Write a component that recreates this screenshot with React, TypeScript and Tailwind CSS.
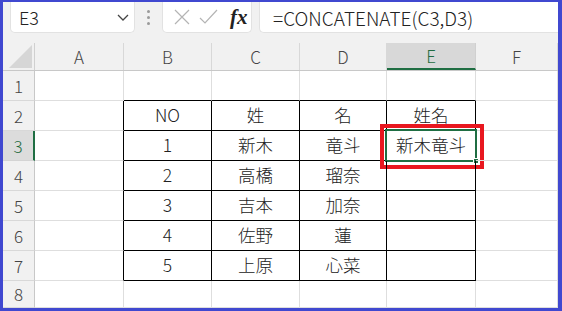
import React from "react";

const COLS = ["A", "B", "C", "D", "E", "F"];
const COLW = [89, 88, 88, 87, 89, 82];
const ROWH = [30, 30, 30, 30, 30, 30, 30, 27];

const data: Record<string, string> = {
  B2: "NO", C2: "姓", D2: "名", E2: "姓名",
  B3: "1", C3: "新木", D3: "竜斗", E3: "新木竜斗",
  B4: "2", C4: "高橋", D4: "瑠奈",
  B5: "3", C5: "吉本", D5: "加奈",
  B6: "4", C6: "佐野", D6: "蓮",
  B7: "5", C7: "上原", D7: "心菜",
};

const font = { fontFamily: '"Noto Sans CJK JP", "Noto Sans", sans-serif' };

export default function App() {
  return (
    <div className="w-[562px] h-[311px] bg-[#4048d0] pl-[3px] pt-[2px] pr-[4px] pb-[3px]" style={font}>
      <div className="w-[555px] h-[306px] bg-white flex flex-col overflow-hidden">
        {/* formula bar */}
        <div className="h-[41px] bg-[#f1f1f1] flex items-start pl-[7px] shrink-0">
          <div className="w-[125px] h-[31px] bg-white rounded-b-[5px] border border-t-0 border-[#e2e2e2] flex items-center justify-between pl-[8px] pr-[4px]">
            <span className="text-[18px] text-[#222] leading-none font-light">E3</span>
            <svg width="14" height="10" viewBox="0 0 14 10">
              <path d="M2 3 L7 8 L12 3" fill="none" stroke="#444" strokeWidth="1.3" />
            </svg>
          </div>
          <div className="w-[27px] h-[31px] flex flex-col items-center justify-center gap-[3px]">
            <span className="w-[3px] h-[3px] bg-[#9a9a9a] rounded-full" />
            <span className="w-[3px] h-[3px] bg-[#9a9a9a] rounded-full" />
            <span className="w-[3px] h-[3px] bg-[#9a9a9a] rounded-full" />
          </div>
          <div className="w-[90px] h-[31px] bg-white rounded-b-[5px] border border-t-0 border-[#e2e2e2] flex items-center pl-[9px] gap-[6px]">
            <svg width="20" height="20" viewBox="0 0 20 20">
              <path d="M3 3 L17 17 M17 3 L3 17" stroke="#b4b4b4" strokeWidth="1.2" />
            </svg>
            <svg width="20" height="20" viewBox="0 0 20 20">
              <path d="M2 11 L7 16 L19 3" fill="none" stroke="#b4b4b4" strokeWidth="1.2" />
            </svg>
            <span className="text-[21px] italic font-bold text-[#222] leading-none ml-[6px]" style={{ fontFamily: '"Liberation Serif", serif' }}>fx</span>
          </div>
          <div className="ml-[7px] flex-1 h-[31px] bg-white rounded-bl-[5px] border border-t-0 border-r-0 border-[#e2e2e2] flex items-center pl-[13px]">
            <span className="text-[19px] text-[#222] leading-none font-light">=CONCATENATE(C3,D3)</span>
          </div>
        </div>

        {/* column header */}
        <div className="h-[28px] flex shrink-0 bg-[#f1f1f1] border-b border-[#c8c8c8]">
          <div className="w-[32px] h-full border-r border-[#d0d0d0] flex items-end justify-end pr-[2px] pb-[2px]">
            <svg width="23" height="23" viewBox="0 0 23 23">
              <path d="M23 0 L23 23 L0 23 Z" fill="#d6d6d6" />
            </svg>
          </div>
          {COLS.map((c, i) => {
            const sel = c === "E";
            return (
              <div
                key={c}
                style={{ width: COLW[i] }}
                className={
                  sel
                    ? "h-full flex items-center justify-center text-[17px] font-light text-[#1f6b3f] bg-[#d8d8d8] border-r border-[#d0d0d0] border-b-2 border-b-[#1f6e43]"
                    : "h-full flex items-center justify-center text-[17px] font-light text-[#444] border-r border-[#d8d8d8]"
                }
              >
                {c}
              </div>
            );
          })}
        </div>

        {/* rows */}
        {ROWH.map((h, ri) => {
          const r = ri + 1;
          const selRow = r === 3;
          return (
            <div key={r} className="flex shrink-0" style={{ height: h }}>
              <div
                className={
                  selRow
                    ? "w-[32px] h-full bg-[#dcdcdc] text-[#1f6b3f] border-r-2 border-[#1f6e43] border-b border-b-[#d4d4d4] flex items-center justify-center text-[17px] font-light"
                    : "w-[32px] h-full bg-[#f1f1f1] text-[#444] border-r border-[#c8c8c8] border-b border-b-[#d8d8d8] flex items-center justify-center text-[17px] font-light"
                }
              >
                {r}
              </div>
              {COLS.map((c, ci) => {
                const inRows = r >= 2 && r <= 7;
                const rightBlack = inRows && ci >= 0 && ci <= 4;
                const bottomBlack = ci >= 1 && ci <= 4 && r >= 1 && r <= 7;
                const key = `${c}${r}`;
                const selCell = key === "E3";
                return (
                  <div
                    key={key}
                    style={{ width: COLW[ci] }}
                    className={[
                      "relative h-full flex items-center justify-center text-[17.5px] font-light text-[#222] border-r border-b",
                      rightBlack ? "border-r-black" : "border-r-[#dedede]",
                      bottomBlack ? "border-b-black" : "border-b-[#dedede]",
                    ].join(" ")}
                  >
                    {data[key] ?? ""}
                    {selCell && (
                      <>
                        <div className="absolute left-[-2px] top-[-2px] right-[-2px] bottom-[-2px] border-2 border-[#1f6e43]" />
                        <div className="absolute right-[-4px] bottom-[-4px] w-[6px] h-[6px] bg-[#1f6e43] border border-white" />
                        <div className="absolute left-[-7px] top-[-7px] right-[-9px] bottom-[-9px] border-4 border-[#e8171f]" />
                      </>
                    )}
                  </div>
                );
              })}
            </div>
          );
        })}
      </div>
    </div>
  );
}
